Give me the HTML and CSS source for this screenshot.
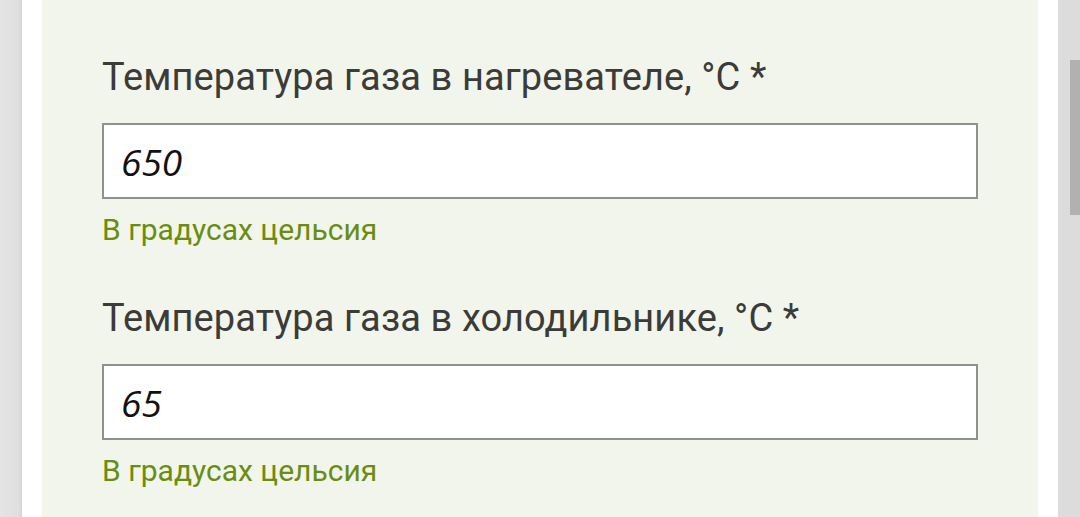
FILE: index.html
```html
<!DOCTYPE html>
<html lang="ru">
<head>
<meta charset="utf-8">
<link rel="stylesheet" href="styles.css">
</head>
<body>
<div class="screen">
  <div class="gutter-left"></div>
  <div class="page">
    <form class="panel">
      <div class="field">
        <label class="label">Температура газа в нагревателе, °C *</label>
        <div class="input">650</div>
        <div class="help">В градусах цельсия</div>
      </div>
      <div class="field">
        <label class="label">Температура газа в холодильнике, °C *</label>
        <div class="input">65</div>
        <div class="help">В градусах цельсия</div>
      </div>
    </form>
  </div>
  <div class="gutter-right"><div class="thumb"></div></div>
</div>
</body>
</html>
```
FILE: styles.css
```css
html, body {
  margin: 0;
  padding: 0;
  height: 100%;
  overflow: hidden;
}
body {
  font-family: Roboto, "Liberation Sans", sans-serif;
  background: #dedede;
}
.screen {
  display: flex;
  height: 517px;
  width: 1080px;
}
.gutter-left {
  width: 22px;
  flex: none;
  background: linear-gradient(to right, #e4e4e4 0%, #e0e0e0 80%, #d6d6d6 100%);
}
.page {
  flex: 1;
  background: #ffffff;
  padding: 0 20px;
  display: flex;
}
.panel {
  flex: 1;
  background: #f2f5eb;
  padding: 53px 60px 0 60px;
  margin: 0;
}
.field {
  display: flex;
  flex-direction: column;
  margin-bottom: 46px;
}
.label {
  font-size: 38px;
  color: #3b3b38;
  line-height: 48px;
  margin-bottom: 22px;
  letter-spacing: 0.1px;
}
.input {
  box-sizing: border-box;
  height: 76px;
  border: 2px solid #8f918d;
  background: #ffffff;
  font-family: "Open Sans", "Noto Sans", sans-serif;
  font-style: italic;
  font-size: 37px;
  color: #111111;
  padding: 0 17px;
  display: flex;
  align-items: center;
  width: 876px;
}
.help {
  font-size: 30px;
  color: #6a8d10;
  line-height: 36px;
  margin-top: 13px;
}
.gutter-right {
  width: 22px;
  flex: none;
  background: #dcdcdc;
  display: flex;
  justify-content: flex-end;
  align-items: flex-start;
}
.thumb {
  width: 10px;
  height: 155px;
  margin-top: 60px;
  background: #b1b1b1;
}
```
